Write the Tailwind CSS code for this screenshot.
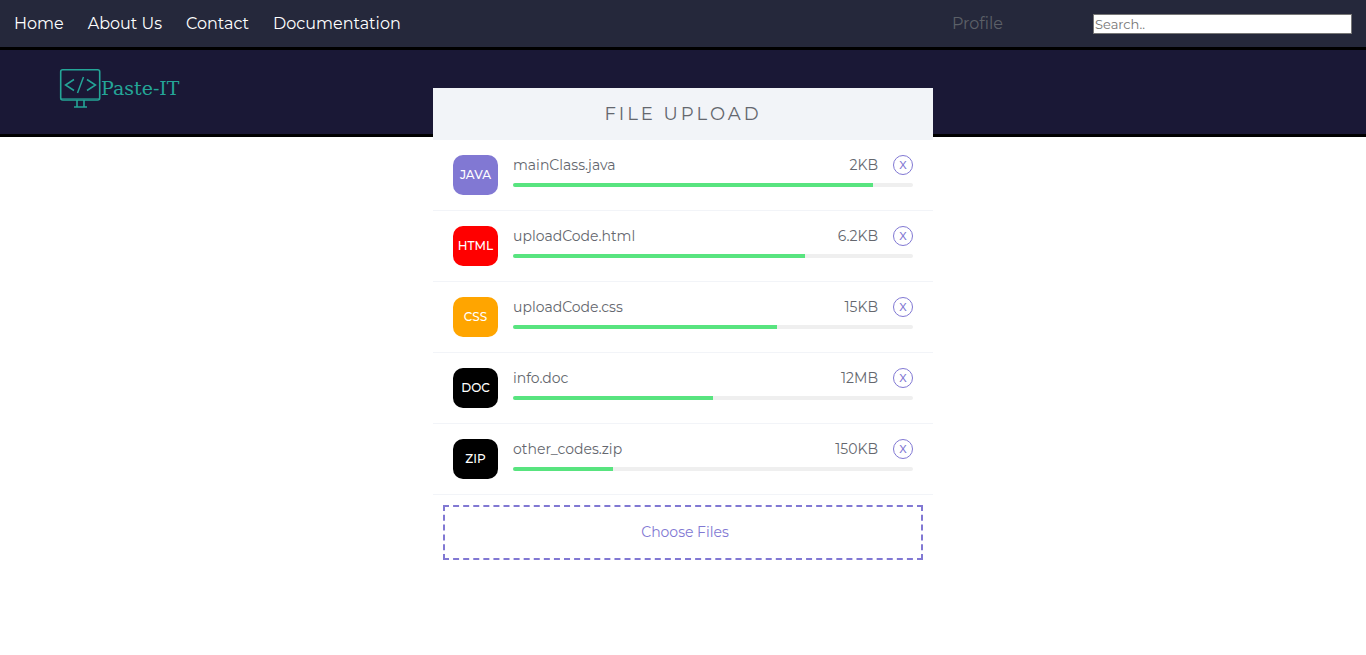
<!DOCTYPE html>
<html lang="en">
<head>
<meta charset="utf-8">
<meta name="viewport" content="width=device-width, initial-scale=1">
<title>Paste-IT</title>
<script src="https://cdn.jsdelivr.net/npm/@tailwindcss/browser@4"></script>
</head>
<body class="bg-white font-['Montserrat','Inter',sans-serif] text-[#64676e]">
<nav class="flex h-[50px] items-center border-b-3 border-black bg-[#25283b] px-3.5 text-base text-white">
  <div class="flex gap-6">
    <a href="#">Home</a>
    <a href="#">About Us</a>
    <a href="#">Contact</a>
    <a href="#">Documentation</a>
  </div>
  <a href="#" class="mr-[90px] ml-auto text-[#5c6068]">Profile</a>
  <input type="search" aria-label="Search" placeholder="Search.." class="h-5 w-[259px] border border-[#767676] bg-white px-px text-[13px] text-black placeholder:text-[#757575]">
</nav>
<header class="h-[87px] border-b-3 border-black bg-[#1a1836] px-[59px] pt-[18px]">
  <a href="#" class="inline-flex items-start text-[#24a597]">
    <svg class="h-[42px] w-[42px]" viewBox="0 0 42 42" fill="none" stroke="currentColor" aria-hidden="true">
      <rect x="1.7" y="1.7" width="39" height="30.3" rx="2" stroke-width="1.6"/>
      <path d="M2 30.500H40.500" stroke-width="1" opacity=".6"/>
      <path d="M18 32v7M25 32v7" stroke-width="2" opacity=".8"/>
      <path d="M15 39h13" stroke-width="1.500"/>
      <path d="M15 11.500L6.500 17l8.500 5.500M28 11.500l8.500 5.500-8.500 5.500M24.500 9l-6 16" stroke-width="1.500"/>
    </svg>
    <span class="pt-1.5 font-['DejaVu_Serif',serif] text-[19px] leading-7 font-light">Paste-IT</span>
  </a>
</header>
<main class="relative mx-auto -mt-[49px] w-full max-w-[500px] bg-white">
  <h1 class="bg-[#f2f4f8] py-3 text-center text-[18px] leading-7 tracking-[3px]">FILE UPLOAD</h1>
  <ul class="text-[14px] leading-5">
    <li class="flex gap-[15px] border-b border-[#f2f4f8] px-5 py-[15px]">
      <span class="flex h-10 w-[45px] items-center justify-center rounded-[10px] bg-[#8178d3] text-[12px] font-medium text-white">JAVA</span>
      <div class="flex-1">
        <div class="flex items-center gap-[15px]"><span>mainClass.java</span><span class="ml-auto">2KB</span>
          <button type="button" aria-label="Remove mainClass.java" class="h-5 w-5 rounded-full border border-[#8178d3] text-[11px] leading-4 font-medium text-[#8178d3]">X</button></div>
        <div role="progressbar" aria-label="mainClass.java" aria-valuenow="90" class="mt-2 h-1 overflow-hidden rounded-sm bg-[#efefef]"><div class="h-full bg-[#58e47f]" style="width:90%"></div></div>
      </div>
    </li>
    <li class="flex gap-[15px] border-b border-[#f2f4f8] px-5 py-[15px]">
      <span class="flex h-10 w-[45px] items-center justify-center rounded-[10px] bg-[#ff0000] text-[12px] font-medium text-white">HTML</span>
      <div class="flex-1">
        <div class="flex items-center gap-[15px]"><span>uploadCode.html</span><span class="ml-auto">6.2KB</span>
          <button type="button" aria-label="Remove uploadCode.html" class="h-5 w-5 rounded-full border border-[#8178d3] text-[11px] leading-4 font-medium text-[#8178d3]">X</button></div>
        <div role="progressbar" aria-label="uploadCode.html" aria-valuenow="73" class="mt-2 h-1 overflow-hidden rounded-sm bg-[#efefef]"><div class="h-full bg-[#58e47f]" style="width:73%"></div></div>
      </div>
    </li>
    <li class="flex gap-[15px] border-b border-[#f2f4f8] px-5 py-[15px]">
      <span class="flex h-10 w-[45px] items-center justify-center rounded-[10px] bg-[#ffa500] text-[12px] font-medium text-white">CSS</span>
      <div class="flex-1">
        <div class="flex items-center gap-[15px]"><span>uploadCode.css</span><span class="ml-auto">15KB</span>
          <button type="button" aria-label="Remove uploadCode.css" class="h-5 w-5 rounded-full border border-[#8178d3] text-[11px] leading-4 font-medium text-[#8178d3]">X</button></div>
        <div role="progressbar" aria-label="uploadCode.css" aria-valuenow="66" class="mt-2 h-1 overflow-hidden rounded-sm bg-[#efefef]"><div class="h-full bg-[#58e47f]" style="width:66%"></div></div>
      </div>
    </li>
    <li class="flex gap-[15px] border-b border-[#f2f4f8] px-5 py-[15px]">
      <span class="flex h-10 w-[45px] items-center justify-center rounded-[10px] bg-black text-[12px] font-medium text-white">DOC</span>
      <div class="flex-1">
        <div class="flex items-center gap-[15px]"><span>info.doc</span><span class="ml-auto">12MB</span>
          <button type="button" aria-label="Remove info.doc" class="h-5 w-5 rounded-full border border-[#8178d3] text-[11px] leading-4 font-medium text-[#8178d3]">X</button></div>
        <div role="progressbar" aria-label="info.doc" aria-valuenow="50" class="mt-2 h-1 overflow-hidden rounded-sm bg-[#efefef]"><div class="h-full bg-[#58e47f]" style="width:50%"></div></div>
      </div>
    </li>
    <li class="flex gap-[15px] border-b border-[#f2f4f8] px-5 py-[15px]">
      <span class="flex h-10 w-[45px] items-center justify-center rounded-[10px] bg-black text-[12px] font-medium text-white">ZIP</span>
      <div class="flex-1">
        <div class="flex items-center gap-[15px]"><span>other_codes.zip</span><span class="ml-auto">150KB</span>
          <button type="button" aria-label="Remove other_codes.zip" class="h-5 w-5 rounded-full border border-[#8178d3] text-[11px] leading-4 font-medium text-[#8178d3]">X</button></div>
        <div role="progressbar" aria-label="other_codes.zip" aria-valuenow="25" class="mt-2 h-1 overflow-hidden rounded-sm bg-[#efefef]"><div class="h-full bg-[#58e47f]" style="width:25%"></div></div>
      </div>
    </li>
  </ul>
  <div class="p-2.5">
    <button type="button" class="h-[55px] w-full border-2 border-dashed border-[#8178d3] pl-1 text-[14px] text-[#8178d3]">Choose Files</button>
  </div>
</main>
</body>
</html>
